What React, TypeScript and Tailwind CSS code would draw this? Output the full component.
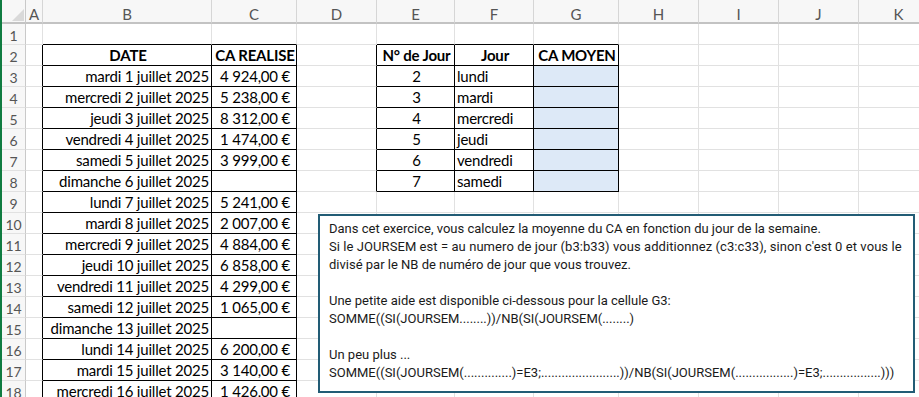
import React from "react";

type Align = "left" | "center" | "right";
type Cell = { text: string; bold?: boolean; align?: Align; fill?: boolean; money?: boolean };

const COLS = ["A", "B", "C", "D", "E", "F", "G", "H", "I", "J", "K"];
const ROWS = Array.from({ length: 18 }, (_, i) => i + 1);

const dates: [string, string][] = [
  ["mardi 1 juillet 2025", "4 924,00 €"],
  ["mercredi 2 juillet 2025", "5 238,00 €"],
  ["jeudi 3 juillet 2025", "8 312,00 €"],
  ["vendredi 4 juillet 2025", "1 474,00 €"],
  ["samedi 5 juillet 2025", "3 999,00 €"],
  ["dimanche 6 juillet 2025", ""],
  ["lundi 7 juillet 2025", "5 241,00 €"],
  ["mardi 8 juillet 2025", "2 007,00 €"],
  ["mercredi 9 juillet 2025", "4 884,00 €"],
  ["jeudi 10 juillet 2025", "6 858,00 €"],
  ["vendredi 11 juillet 2025", "4 299,00 €"],
  ["samedi 12 juillet 2025", "1 065,00 €"],
  ["dimanche 13 juillet 2025", ""],
  ["lundi 14 juillet 2025", "6 200,00 €"],
  ["mardi 15 juillet 2025", "3 140,00 €"],
  ["mercredi 16 juillet 2025", "1 426,00 €"],
];

const days: [string, string][] = [
  ["2", "lundi"],
  ["3", "mardi"],
  ["4", "mercredi"],
  ["5", "jeudi"],
  ["6", "vendredi"],
  ["7", "samedi"],
];

function buildCells(): Record<string, Cell> {
  const m: Record<string, Cell> = {};
  m["B2"] = { text: "DATE", bold: true, align: "center" };
  m["C2"] = { text: "CA REALISE", bold: true, align: "center" };
  dates.forEach(([d, v], i) => {
    const r = i + 3;
    m["B" + r] = { text: d, align: "right" };
    m["C" + r] = { text: v, align: "right", money: true };
  });
  m["E2"] = { text: "N° de Jour", bold: true, align: "center" };
  m["F2"] = { text: "Jour", bold: true, align: "center" };
  m["G2"] = { text: "CA MOYEN", bold: true, align: "center" };
  days.forEach(([n, d], i) => {
    const r = i + 3;
    m["E" + r] = { text: n, align: "center" };
    m["F" + r] = { text: d, align: "left" };
    m["G" + r] = { text: "", fill: true };
  });
  return m;
}

const cells = buildCells();

function inTable(r: number, c: number): boolean {
  const col = COLS[c];
  if (!col) return false;
  if ((col === "B" || col === "C") && r >= 2) return true;
  if ((col === "E" || col === "F" || col === "G") && r >= 2 && r <= 8) return true;
  return false;
}

function GridCell({ r, c }: { r: number; c: number }) {
  const key = COLS[c] + r;
  const cell = cells[key];
  const rightDark = inTable(r, c) || inTable(r, c + 1);
  const bottomDark = inTable(r, c) || inTable(r + 1, c);
  const align = cell?.align ?? "left";
  return (
    <div
      className={[
        "h-[21px] flex items-end pb-[1px] overflow-hidden whitespace-nowrap text-[15px] leading-[18px] tracking-[-0.2px] text-black",
        rightDark ? "border-r border-r-black" : "border-r border-r-[#e1e1e1]",
        bottomDark ? "border-b border-b-black" : "border-b border-b-[#e1e1e1]",
        cell?.fill ? "bg-[#dde9f7]" : "bg-white",
        align === "center" ? "justify-center" : align === "right" ? "justify-end" : "justify-start",
        cell?.money ? "pr-[6px]" : align === "right" ? "pr-[2px]" : "pl-[2px]",
        cell?.bold ? "font-bold" : "font-normal",
      ].join(" ")}
    >
      <span className="shrink-0">{cell?.text ?? ""}</span>
    </div>
  );
}

function Corner() {
  return (
    <div className="h-[24px] bg-[#f7f7f7] border-r border-r-[#c9c9c9] border-b-2 border-b-[#c3c3c3] relative">
      <svg width="24" height="22" className="absolute left-0 top-0">
        <polygon points="22,9 22,21 10,21" fill="#d9d9d9" />
      </svg>
    </div>
  );
}

export default function App() {
  return (
    <div className="w-[919px] h-[397px] overflow-hidden bg-white flex">
      <div className="w-[2px] h-full bg-[#107c41] shrink-0" />
      <div className="relative flex-1">
        <div
          className="grid grid-cols-[24px_17px_169px_85px_80px_78px_79px_85px_80px_80px_80px_80px]"
          style={{ fontFamily: "Lato, 'Liberation Sans', sans-serif" }}
        >
          <Corner />
          {COLS.map((col) => (
            <div
              key={col}
              className="h-[24px] bg-[#f7f7f7] border-r border-r-[#d6d6d6] border-b-2 border-b-[#c3c3c3] flex items-center justify-center pt-[6px] text-[15px] leading-[16px] text-[#555]"
            >
              {col}
            </div>
          ))}
          {ROWS.map((r) => (
            <React.Fragment key={r}>
              <div className="h-[21px] bg-[#f7f7f7] border-r border-r-[#c9c9c9] border-b border-b-[#e1e1e1] flex items-center justify-center pt-[2px] text-[14px] text-[#555]">
                {r}
              </div>
              {COLS.map((_, c) => (
                <GridCell key={c} r={r} c={c} />
              ))}
            </React.Fragment>
          ))}
        </div>

        <div
          className="absolute left-[316px] top-[214px] w-[597px] h-[179px] border-2 border-[#225c75] bg-white pl-[9px] pt-[4px] text-[13px] leading-[18px] text-[#1a1a1a] whitespace-nowrap"
          style={{ fontFamily: "Roboto, 'Liberation Sans', sans-serif" }}
        >
          <div>Dans cet exercice, vous calculez la moyenne du CA en fonction du jour de la semaine.</div>
          <div className="tracking-[0.07px]">Si le JOURSEM est = au numero de jour (b3:b33) vous additionnez (c3:c33), sinon c'est 0 et vous le</div>
          <div>divisé par le NB de numéro de jour que vous trouvez.</div>
          <div>&nbsp;</div>
          <div>Une petite aide est disponible ci-dessous pour la cellule G3:</div>
          <div>SOMME((SI(JOURSEM........))/NB(SI(JOURSEM(........)</div>
          <div>&nbsp;</div>
          <div>Un peu plus ...</div>
          <div>SOMME((SI(JOURSEM(..............)=E3;.......................))/NB(SI(JOURSEM(.................)=E3;.................)))</div>
        </div>
      </div>
    </div>
  );
}
